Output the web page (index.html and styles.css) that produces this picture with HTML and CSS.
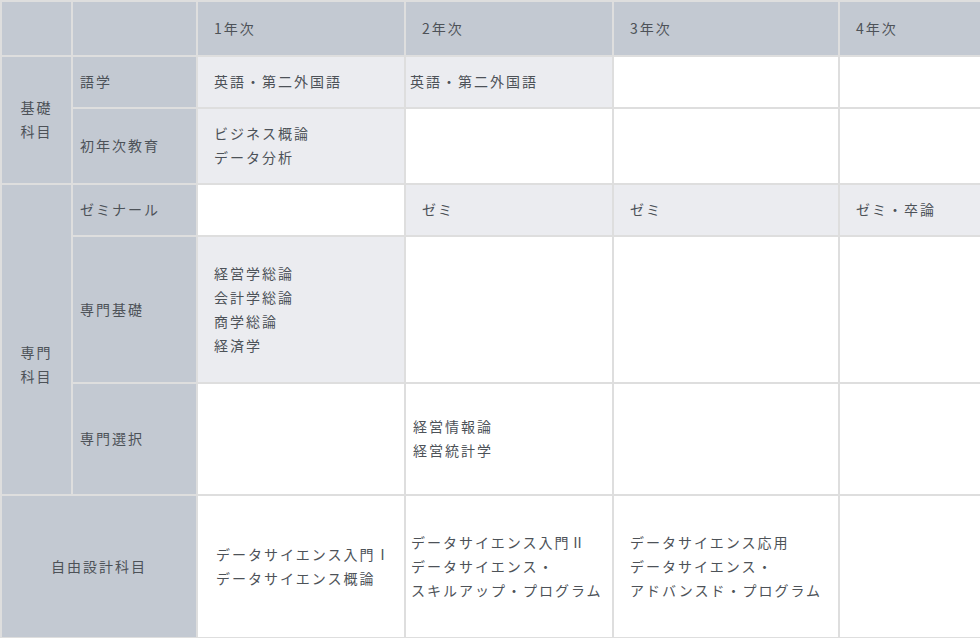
FILE: index.html
```html
<!DOCTYPE html>
<html lang="ja">
<head>
<meta charset="utf-8">
<title>カリキュラム</title>
<link rel="stylesheet" href="styles.css">
</head>
<body>
<div class="curriculum">
  <div class="cell head"></div>
  <div class="cell head"></div>
  <div class="cell head year">1年次</div>
  <div class="cell head year">2年次</div>
  <div class="cell head year">3年次</div>
  <div class="cell head year">4年次</div>

  <div class="cell head group group-basic">基礎<br>科目</div>
  <div class="cell head sub">語学</div>
  <div class="cell light">英語・第二外国語</div>
  <div class="cell light pad-s">英語・第二外国語</div>
  <div class="cell"></div>
  <div class="cell"></div>

  <div class="cell head sub">初年次教育</div>
  <div class="cell light">ビジネス概論<br>データ分析</div>
  <div class="cell"></div>
  <div class="cell"></div>
  <div class="cell"></div>

  <div class="cell head group group-major">専門<br>科目</div>
  <div class="cell head sub">ゼミナール</div>
  <div class="cell"></div>
  <div class="cell light">ゼミ</div>
  <div class="cell light">ゼミ</div>
  <div class="cell light">ゼミ・卒論</div>

  <div class="cell head sub">専門基礎</div>
  <div class="cell light">経営学総論<br>会計学総論<br>商学総論<br>経済学</div>
  <div class="cell"></div>
  <div class="cell"></div>
  <div class="cell"></div>

  <div class="cell head sub">専門選択</div>
  <div class="cell"></div>
  <div class="cell pad-m">経営情報論<br>経営統計学</div>
  <div class="cell"></div>
  <div class="cell"></div>

  <div class="cell head free">自由設計科目</div>
  <div class="cell pad-l">データサイエンス入門Ⅰ<br>データサイエンス概論</div>
  <div class="cell pad-xs">データサイエンス入門Ⅱ<br>データサイエンス・<br>スキルアップ・プログラム</div>
  <div class="cell">データサイエンス応用<br>データサイエンス・<br>アドバンスド・プログラム</div>
  <div class="cell"></div>
</div>
</body>
</html>
```

FILE: styles.css
```css
html, body {
  margin: 0;
  padding: 0;
  background: #ffffff;
  overflow: hidden;
}

.curriculum {
  width: 984px;
  display: grid;
  grid-template-columns: 69px 123px 206px 206px 224px 142px;
  grid-template-rows: 53px 50px 74px 50px 145px 110px 141px;
  gap: 2px;
  padding: 2px;
  background: #dedede;
  font-family: "Noto Sans CJK JP", "Noto Sans", sans-serif;
  font-size: 14px;
  line-height: 24px;
  letter-spacing: 2px;
  color: #4d5258;
}

.cell {
  background: #ffffff;
  display: flex;
  flex-direction: column;
  justify-content: center;
  padding-left: 16px;
  padding-bottom: 2px;
  white-space: nowrap;
}

.head {
  background: #c3c9d2;
}

.light {
  background: #ebecf0;
}

.sub {
  padding-left: 7px;
}

.group {
  grid-row: span 2;
  padding-left: 0;
  align-items: center;
  text-align: center;
}

.group-major {
  grid-row: span 3;
  padding-top: 50px;
}

.free {
  grid-column: span 2;
  padding-left: 0;
  align-items: center;
}

.pad-s { padding-left: 4px; }
.pad-xs { padding-left: 5px; }
.pad-m { padding-left: 7px; }
.pad-l { padding-left: 18px; }
```
